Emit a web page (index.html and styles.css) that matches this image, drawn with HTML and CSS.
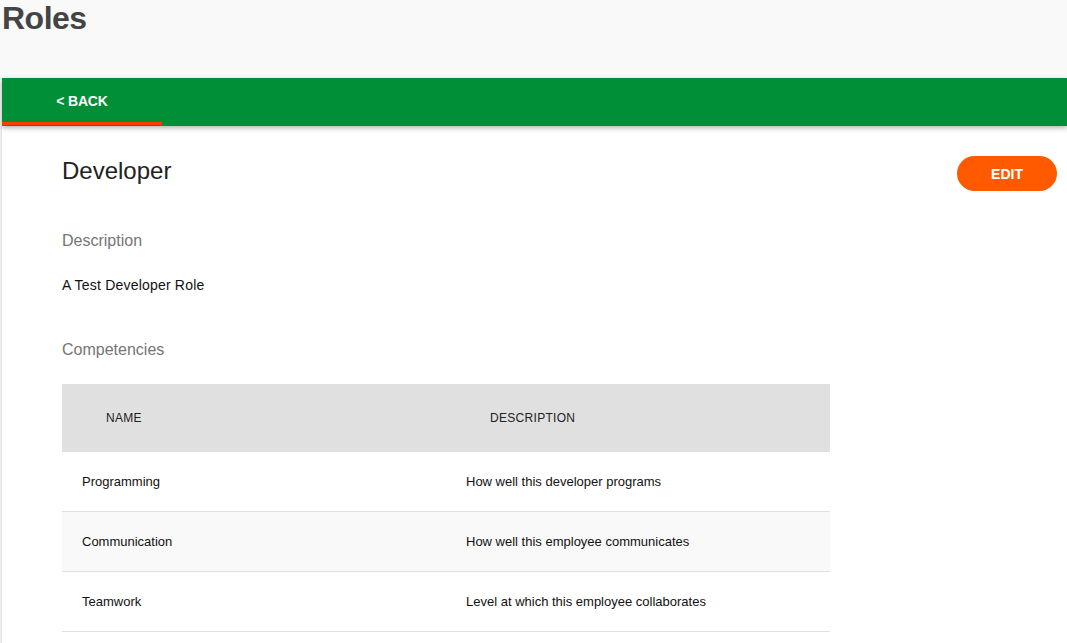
FILE: index.html
```html
<!DOCTYPE html>
<html>
<head>
<meta charset="utf-8">
<link rel="stylesheet" href="styles.css">
</head>
<body>
<div class="page">
  <h1 class="page-title">Roles</h1>
  <nav class="tabbar">
    <a class="tab active">&lt; BACK</a>
  </nav>
  <section class="card">
    <div class="card-head">
      <h2 class="role-name">Developer</h2>
      <button class="edit-btn">EDIT</button>
    </div>
    <div class="label label-desc">Description</div>
    <p class="desc-text">A Test Developer Role</p>
    <div class="label label-comp">Competencies</div>
    <table class="comp-table">
      <thead>
        <tr><th>NAME</th><th>DESCRIPTION</th></tr>
      </thead>
      <tbody>
        <tr><td>Programming</td><td>How well this developer programs</td></tr>
        <tr><td>Communication</td><td>How well this employee communicates</td></tr>
        <tr><td>Teamwork</td><td>Level at which this employee collaborates</td></tr>
      </tbody>
    </table>
  </section>
</div>
</body>
</html>
```
FILE: styles.css
```css
html, body {
  margin: 0;
  padding: 0;
  background: #f9f9f9;
  font-family: "Liberation Sans", Arial, sans-serif;
  overflow: hidden;
}
.page {
  padding-left: 2px;
}
.page-title {
  margin: 0;
  font-size: 32px;
  line-height: 36px;
  font-weight: bold;
  color: #444;
  letter-spacing: -0.5px;
  height: 78px;
}
.tabbar {
  display: flex;
  height: 48px;
  background: #008f36;
  box-shadow: 0 2px 5px rgba(0,0,0,0.3);
  position: relative;
  z-index: 1;
}
.tab {
  width: 160px;
  display: flex;
  align-items: center;
  justify-content: center;
  color: #fff;
  font-size: 14px;
  font-weight: bold;
  box-sizing: border-box;
  letter-spacing: -0.2px;
}
.tab.active {
  border-bottom: 3px solid #ff3d00;
  padding-top: 2px;
  height: 47px;
}
.card {
  background: #fff;
  min-height: 510px;
  padding: 30px 10px 0 60px;
  box-shadow: -1px 0 2px rgba(0,0,0,0.12);
}
.card-head {
  display: flex;
  justify-content: space-between;
  align-items: flex-start;
}
.role-name {
  margin: 0;
  font-size: 24px;
  line-height: 30px;
  font-weight: normal;
  color: #222;
}
.edit-btn {
  width: 100px;
  height: 35px;
  border: none;
  border-radius: 18px;
  background: #ff5a00;
  color: #fff;
  font-family: "Liberation Sans", Arial, sans-serif;
  font-size: 14px;
  font-weight: bold;
  padding: 0;
}
.label {
  font-size: 16px;
  line-height: 20px;
  color: #757575;
}
.label-desc {
  margin-top: 40px;
}
.desc-text {
  margin: 24px 0 0;
  font-size: 14px;
  line-height: 20px;
  color: #111;
  letter-spacing: 0.2px;
}
.label-comp {
  margin-top: 45px;
}
.comp-table {
  margin-top: 24px;
  width: 768px;
  border-collapse: collapse;
  table-layout: fixed;
}
.comp-table th {
  background: #e0e0e0;
  height: 68px;
  text-align: left;
  padding: 0 0 0 44px;
  font-size: 12px;
  font-weight: normal;
  color: #222;
  letter-spacing: 0.3px;
}
.comp-table td {
  height: 59px;
  padding: 0 0 0 20px;
  font-size: 13px;
  color: #111;
  border-bottom: 1px solid #e0e0e0;
}
.comp-table tbody tr:nth-child(2) td {
  background: #f9f9f9;
}
```
